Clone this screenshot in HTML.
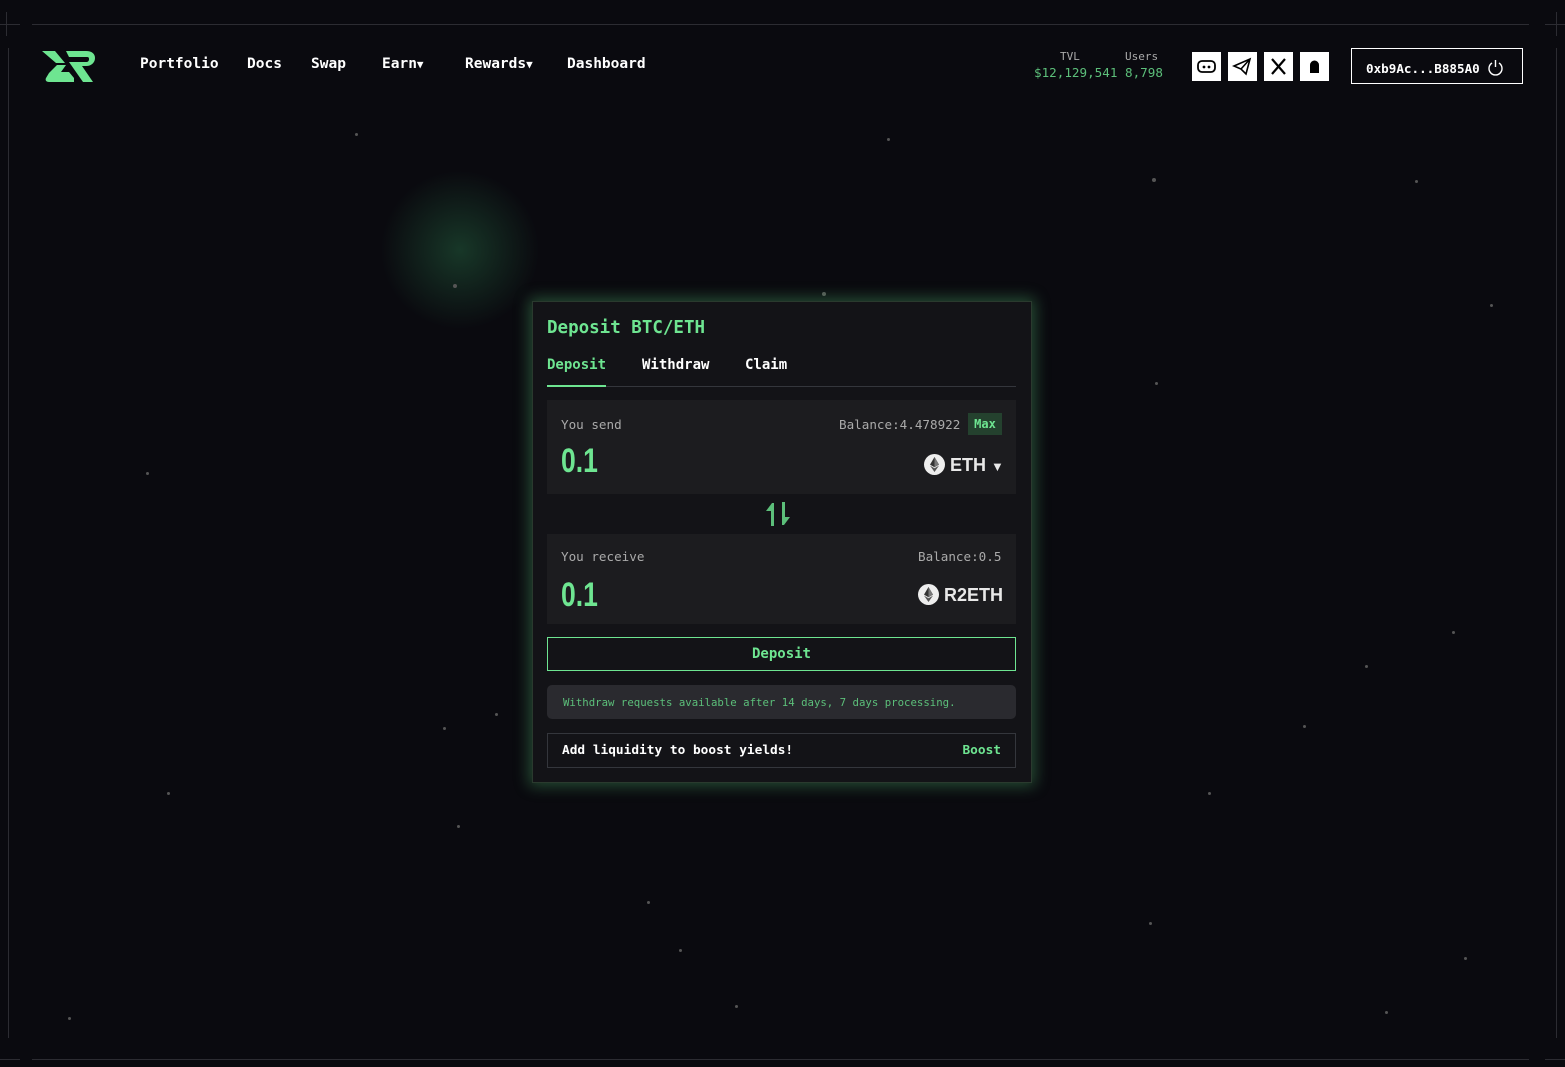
<!DOCTYPE html>
<html><head><meta charset="utf-8"><style>
*{margin:0;padding:0;box-sizing:border-box}
body{width:1565px;height:1067px;background:#0a0a0f;overflow:hidden;position:relative;font-family:"DejaVu Sans Mono","Liberation Mono",monospace;color:#fff}
.a{position:absolute}
.hl{position:absolute;height:1px;background:#2c2c32}
.vl{position:absolute;width:1px;background:#2c2c32}
.nav{font-size:14.5px;top:56px;color:#fff;font-weight:bold}
.star{position:absolute;width:3px;height:3px;border-radius:50%;background:#555}
.ib{position:absolute;top:52px;width:29px;height:29px;background:#fff}
.card{position:absolute;left:532px;top:301px;width:500px;height:482px;background:#131317;border:1px solid #2a3a2e;box-shadow:0 0 14px 3px rgba(90,200,120,.35)}
.g{color:#6ee591}
.box{position:absolute;left:14px;width:469px;background:#1c1c1f}
.big{font-family:"Liberation Sans",sans-serif;font-weight:bold;font-size:34px;color:#6ee591;transform:scaleX(.78);transform-origin:left}
.lbl{font-size:12.6px;color:#aaa}
.coin{display:inline-block;width:21px;height:21px;vertical-align:-4px}
</style></head><body>
<div class="hl" style="left:32px;right:36px;top:24px"></div>
<div class="hl" style="left:32px;right:36px;top:1059px"></div>
<div class="hl" style="left:0;width:20px;top:24px"></div>
<div class="hl" style="left:1545px;width:20px;top:24px"></div>
<div class="hl" style="left:0;width:20px;top:1059px"></div>
<div class="hl" style="left:1545px;width:20px;top:1059px"></div>
<div class="vl" style="left:8px;top:48px;height:990px"></div>
<div class="vl" style="left:1556px;top:48px;height:990px"></div>
<div class="vl" style="left:6px;top:12px;height:24px"></div>
<div class="vl" style="left:1556px;top:12px;height:24px"></div>

<div class="a" style="left:380px;top:170px;width:160px;height:160px;border-radius:50%;background:radial-gradient(circle,rgba(40,110,70,.45),rgba(40,110,70,0) 70%)"></div>

<svg class="a" style="left:42px;top:51px" width="54" height="31" viewBox="0 0 54 31"><path fill="#6ee591" d="M0 0h13l10 12h-9zM24 0h20c6 0 9 3 9 7s-3 8-9 8h-4l11 16h-10l-14-20h17c2 0 3-1 3-3s-1-2-3-2H27zM7 22l8-8h9l-5 7h8l5 6v4H7c-3 0-4-2-3-4z"/></svg>

<div class="a nav" style="left:140px">Portfolio</div>
<div class="a nav" style="left:247px">Docs</div>
<div class="a nav" style="left:311px">Swap</div>
<div class="a nav" style="left:382px">Earn<span style="font-size:11px">▼</span></div>
<div class="a nav" style="left:465px">Rewards<span style="font-size:11px">▼</span></div>
<div class="a nav" style="left:567px">Dashboard</div>

<div class="a" style="left:1060px;top:50px;font-size:11px;color:#aaa">TVL</div>
<div class="a" style="left:1125px;top:50px;font-size:11px;color:#aaa">Users</div>
<div class="a" style="left:1034px;top:65px;font-size:12.6px;color:#5cbf7a">$12,129,541 8,798</div>

<div class="ib" style="left:1192px"><svg width="29" height="29"><rect x="6" y="9" width="17" height="11" rx="4" fill="none" stroke="#000" stroke-width="1.8"/><circle cx="12" cy="15" r="1.4"/><circle cx="17" cy="15" r="1.4"/></svg></div>
<div class="ib" style="left:1228px"><svg width="29" height="29"><path d="M6 14L22 7 18 22 13 17zM13 17l9-10" fill="none" stroke="#000" stroke-width="1.6"/></svg></div>
<div class="ib" style="left:1264px"><svg width="29" height="29"><path d="M8 7l13 15M21 7L8 22" stroke="#000" stroke-width="2.2"/></svg></div>
<div class="ib" style="left:1300px"><svg width="29" height="29"><path d="M10 21v-8a4.5 4.5 0 0 1 9 0v8z" fill="#000"/></svg></div>

<div class="a" style="left:1351px;top:48px;width:172px;height:36px;border:1px solid #fff;font-size:12.6px;font-weight:bold;padding:10px 0 0 14px">0xb9Ac...B885A0 <svg style="vertical-align:-3px" width="17" height="17"><path d="M5 4a6.5 6.5 0 1 0 7 0" fill="none" stroke="#fff" stroke-width="1.4"/><path d="M8.5 1v7" stroke="#fff" stroke-width="1.4"/></svg></div>

<div class="star" style="left:355px;top:133px"></div><div class="star" style="left:887px;top:138px"></div>
<div class="star" style="left:1152px;top:178px;width:4px;height:4px"></div><div class="star" style="left:1415px;top:180px"></div>
<div class="star" style="left:453px;top:284px;width:4px;height:4px"></div><div class="star" style="left:822px;top:292px;width:4px;height:4px"></div>
<div class="star" style="left:1490px;top:304px"></div><div class="star" style="left:1155px;top:382px"></div>
<div class="star" style="left:146px;top:472px"></div><div class="star" style="left:1365px;top:665px"></div>
<div class="star" style="left:1452px;top:631px"></div><div class="star" style="left:495px;top:713px"></div>
<div class="star" style="left:443px;top:727px"></div><div class="star" style="left:1303px;top:725px"></div>
<div class="star" style="left:167px;top:792px"></div><div class="star" style="left:457px;top:825px"></div>
<div class="star" style="left:647px;top:901px"></div><div class="star" style="left:1149px;top:922px"></div>
<div class="star" style="left:679px;top:949px"></div><div class="star" style="left:1464px;top:957px"></div>
<div class="star" style="left:68px;top:1017px"></div><div class="star" style="left:1385px;top:1011px"></div>
<div class="star" style="left:735px;top:1005px"></div><div class="star" style="left:1208px;top:792px"></div>

<svg width="0" height="0" style="position:absolute"><defs><symbol id="eth" viewBox="0 0 21 21"><circle cx="10.5" cy="10.5" r="10.5" fill="#eee"/><path d="M10.5 3l-4.5 7.6 4.5 2.6 4.5-2.6z" fill="#333"/><path d="M10.5 14.2l-4.5-2.6 4.5 6.4 4.5-6.4z" fill="#555"/><path d="M10.5 3v10.2l4.5-2.6z" fill="#777"/></symbol></defs></svg>

<div class="card">
 <div class="a g" style="left:14px;top:16px;font-size:17.5px;font-weight:bold">Deposit BTC/ETH</div>
 <div class="a g" style="left:14px;top:55px;font-size:14px;font-weight:bold">Deposit</div>
 <div class="a" style="left:109px;top:55px;font-size:14px;font-weight:bold">Withdraw</div>
 <div class="a" style="left:212px;top:55px;font-size:14px;font-weight:bold">Claim</div>
 <div class="a" style="left:14px;top:84px;width:469px;height:1px;background:#34363c"></div>
 <div class="a" style="left:14px;top:83px;width:59px;height:2px;background:#6ee591"></div>

 <div class="box" style="top:98px;height:94px">
  <div class="a lbl" style="left:14px;top:17px">You send</div>
  <div class="a lbl" style="left:292px;top:17px">Balance:4.478922</div>
  <div class="a g" style="left:421px;top:13px;width:34px;height:22px;background:#24412e;font-size:12px;font-weight:bold;text-align:center;line-height:22px">Max</div>
  <div class="a big" style="left:14px;top:42px">0.1</div>
  <div class="a" style="left:377px;top:54px;font-family:'Liberation Sans',sans-serif;font-weight:bold;font-size:18px;color:#e8e8e8"><svg class="coin"><use href="#eth"/></svg> ETH <span style="font-size:13px">▼</span></div>
 </div>
 <svg class="a" style="left:232px;top:200px" width="26" height="24" viewBox="0 0 26 24"><path d="M1 9L7 1h2v23H6V9zM25 15l-6 8h-2V0h3v15z" fill="#5cbf7a"/></svg>
 <div class="box" style="top:232px;height:90px">
  <div class="a lbl" style="left:14px;top:15px">You receive</div>
  <div class="a lbl" style="left:371px;top:15px">Balance:0.5</div>
  <div class="a big" style="left:14px;top:42px">0.1</div>
  <div class="a" style="left:371px;top:50px;font-family:'Liberation Sans',sans-serif;font-weight:bold;font-size:18px;color:#e8e8e8"><svg class="coin"><use href="#eth"/></svg> R2ETH</div>
 </div>
 <div class="a g" style="left:14px;top:335px;width:469px;height:34px;border:1px solid #6ee591;text-align:center;font-size:14px;font-weight:bold;line-height:32px">Deposit</div>
 <div class="a" style="left:14px;top:383px;width:469px;height:34px;background:#2a2a2f;border-radius:5px;color:#5cbf7a;font-size:10.7px;padding:11px 0 0 16px">Withdraw requests available after 14 days, 7 days processing.</div>
 <div class="a" style="left:14px;top:431px;width:469px;height:35px;border:1px solid #34363c;font-size:12.8px;font-weight:bold;padding:9px 14px">Add liquidity to boost yields!<span class="g" style="float:right">Boost</span></div>
</div>
</body></html>
